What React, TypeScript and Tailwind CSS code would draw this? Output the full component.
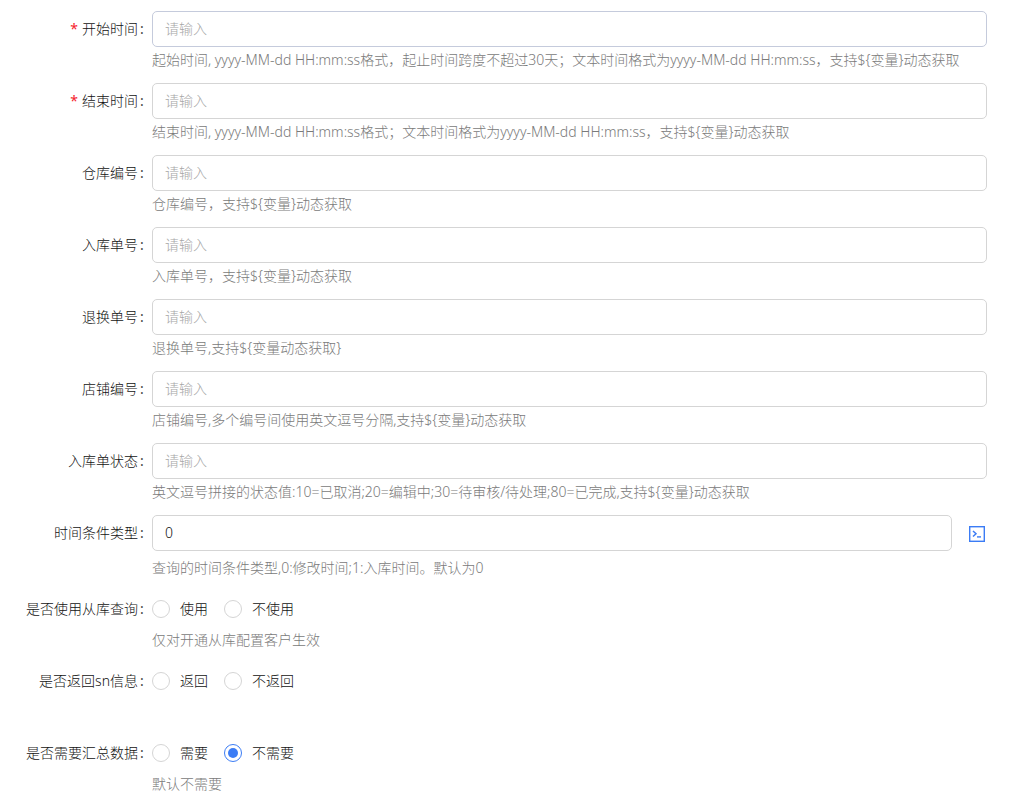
import React, { useState } from 'react';

interface TextField {
  id: string;
  label: string;
  hint: string;
  required?: boolean;
  active?: boolean;
}

interface RadioField {
  id: string;
  label: string;
  options: string[];
  hint?: string;
}

const textFields: TextField[] = [
  {
    id: 'startTime',
    label: '开始时间',
    hint: '起始时间, yyyy-MM-dd HH:mm:ss格式，起止时间跨度不超过30天；文本时间格式为yyyy-MM-dd HH:mm:ss，支持${变量}动态获取',
    required: true,
    active: true,
  },
  {
    id: 'endTime',
    label: '结束时间',
    hint: '结束时间, yyyy-MM-dd HH:mm:ss格式；文本时间格式为yyyy-MM-dd HH:mm:ss，支持${变量}动态获取',
    required: true,
  },
  { id: 'warehouseNo', label: '仓库编号', hint: '仓库编号，支持${变量}动态获取' },
  { id: 'stockinNo', label: '入库单号', hint: '入库单号，支持${变量}动态获取' },
  { id: 'refundNo', label: '退换单号', hint: '退换单号,支持${变量动态获取}' },
  { id: 'shopNo', label: '店铺编号', hint: '店铺编号,多个编号间使用英文逗号分隔,支持${变量}动态获取' },
  {
    id: 'status',
    label: '入库单状态',
    hint: '英文逗号拼接的状态值:10=已取消;20=编辑中;30=待审核/待处理;80=已完成,支持${变量}动态获取',
  },
];

const radioFields: RadioField[] = [
  { id: 'useSlave', label: '是否使用从库查询', options: ['使用', '不使用'], hint: '仅对开通从库配置客户生效' },
  { id: 'returnSn', label: '是否返回sn信息', options: ['返回', '不返回'] },
  { id: 'needTotal', label: '是否需要汇总数据', options: ['需要', '不需要'], hint: '默认不需要' },
];

const inputClass =
  'h-9 w-full min-w-0 rounded-[5px] border bg-white px-3 pb-0.5 text-sm font-light text-[#111] outline-none placeholder:text-[#a6a6a6] focus:border-[#3b7cf5]';

const Colon = () => <span className="ml-0.5 w-1 font-normal text-[#444]">:</span>;

const Hint: React.FC<{ id: string; text?: string }> = ({ id, text }) => (
  <p id={id} className="h-[26px] whitespace-nowrap leading-[26px] text-[#7a7a7a]">{text}</p>
);

const TerminalIcon = () => (
  <svg width="16" height="16" viewBox="0 0 16 16" fill="none" stroke="#3b7cf5">
    <rect x="0.7" y="0.7" width="14.6" height="14.6" strokeWidth="1.4" />
    <path d="M4 5l3 2.75L4 10.5" strokeWidth="1.5" />
    <path d="M8 10.9h4" strokeWidth="1.4" />
  </svg>
);

const App: React.FC = () => {
  const [values, setValues] = useState<Record<string, string>>({ timeType: '0' });
  const [choices, setChoices] = useState<Record<string, string>>({ needTotal: '不需要' });

  const setValue = (id: string, value: string) => {
    setValues(prev => ({ ...prev, [id]: value }));
  };

  return (
    <form className="bg-white pt-[11px] pr-12 text-sm font-light text-[#111] font-['Noto_Sans','Noto_Sans_CJK_SC',sans-serif]">
      {textFields.map(field => (
        <div key={field.id} className="mb-2.5 flex gap-2">
          <label htmlFor={field.id} className="flex h-9 w-36 shrink-0 items-center justify-end">
            {field.required && <span className="mr-1 font-normal text-[#f5222d]">*</span>}
            {field.label}
            <Colon />
          </label>
          <div className="min-w-0 flex-1">
            <input
              id={field.id}
              type="text"
              placeholder="请输入"
              required={field.required}
              aria-describedby={`${field.id}-hint`}
              className={`${inputClass} block ${field.active ? 'border-[#c5cbdc]' : 'border-[#d5d5d5]'}`}
              value={values[field.id] || ''}
              onChange={e => setValue(field.id, e.target.value)}
            />
            <Hint id={`${field.id}-hint`} text={field.hint} />
          </div>
        </div>
      ))}

      <div className="mb-2.5 flex gap-2">
        <label htmlFor="timeType" className="flex h-9 w-36 shrink-0 items-center justify-end">
          时间条件类型
          <Colon />
        </label>
        <div className="min-w-0 flex-1">
          <div className="mb-1 flex items-center gap-[17px] pr-0.5">
            <input
              id="timeType"
              type="text"
              aria-describedby="timeType-hint"
              className={`${inputClass} border-[#d5d5d5]`}
              value={values.timeType}
              onChange={e => setValue('timeType', e.target.value)}
            />
            <button type="button" aria-label="变量" className="shrink-0 cursor-pointer pt-0.5">
              <TerminalIcon />
            </button>
          </div>
          <Hint id="timeType-hint" text="查询的时间条件类型,0:修改时间;1:入库时间。默认为0" />
        </div>
      </div>

      {radioFields.map(field => (
        <div
          key={field.id}
          role="radiogroup"
          aria-labelledby={`${field.id}-label`}
          className="mb-2.5 flex gap-2"
        >
          <span id={`${field.id}-label`} className="flex h-9 w-36 shrink-0 items-center justify-end">
            {field.label}
            <Colon />
          </span>
          <div className="min-w-0 flex-1">
            <div className="flex h-9 items-center gap-4">
              {field.options.map(option => (
                <label key={option} className="flex cursor-pointer items-center gap-2.5">
                  <input
                    type="radio"
                    name={field.id}
                    className="grid size-[18px] appearance-none place-items-center rounded-full border border-[#d5d5d5] before:size-2.5 before:rounded-full checked:border-[#3b7cf5] checked:before:bg-[#3b7cf5]"
                    checked={choices[field.id] === option}
                    onChange={() => setChoices(prev => ({ ...prev, [field.id]: option }))}
                  />
                  {option}
                </label>
              ))}
            </div>
            <Hint id={`${field.id}-hint`} text={field.hint} />
          </div>
        </div>
      ))}
    </form>
  );
};

export default App;
